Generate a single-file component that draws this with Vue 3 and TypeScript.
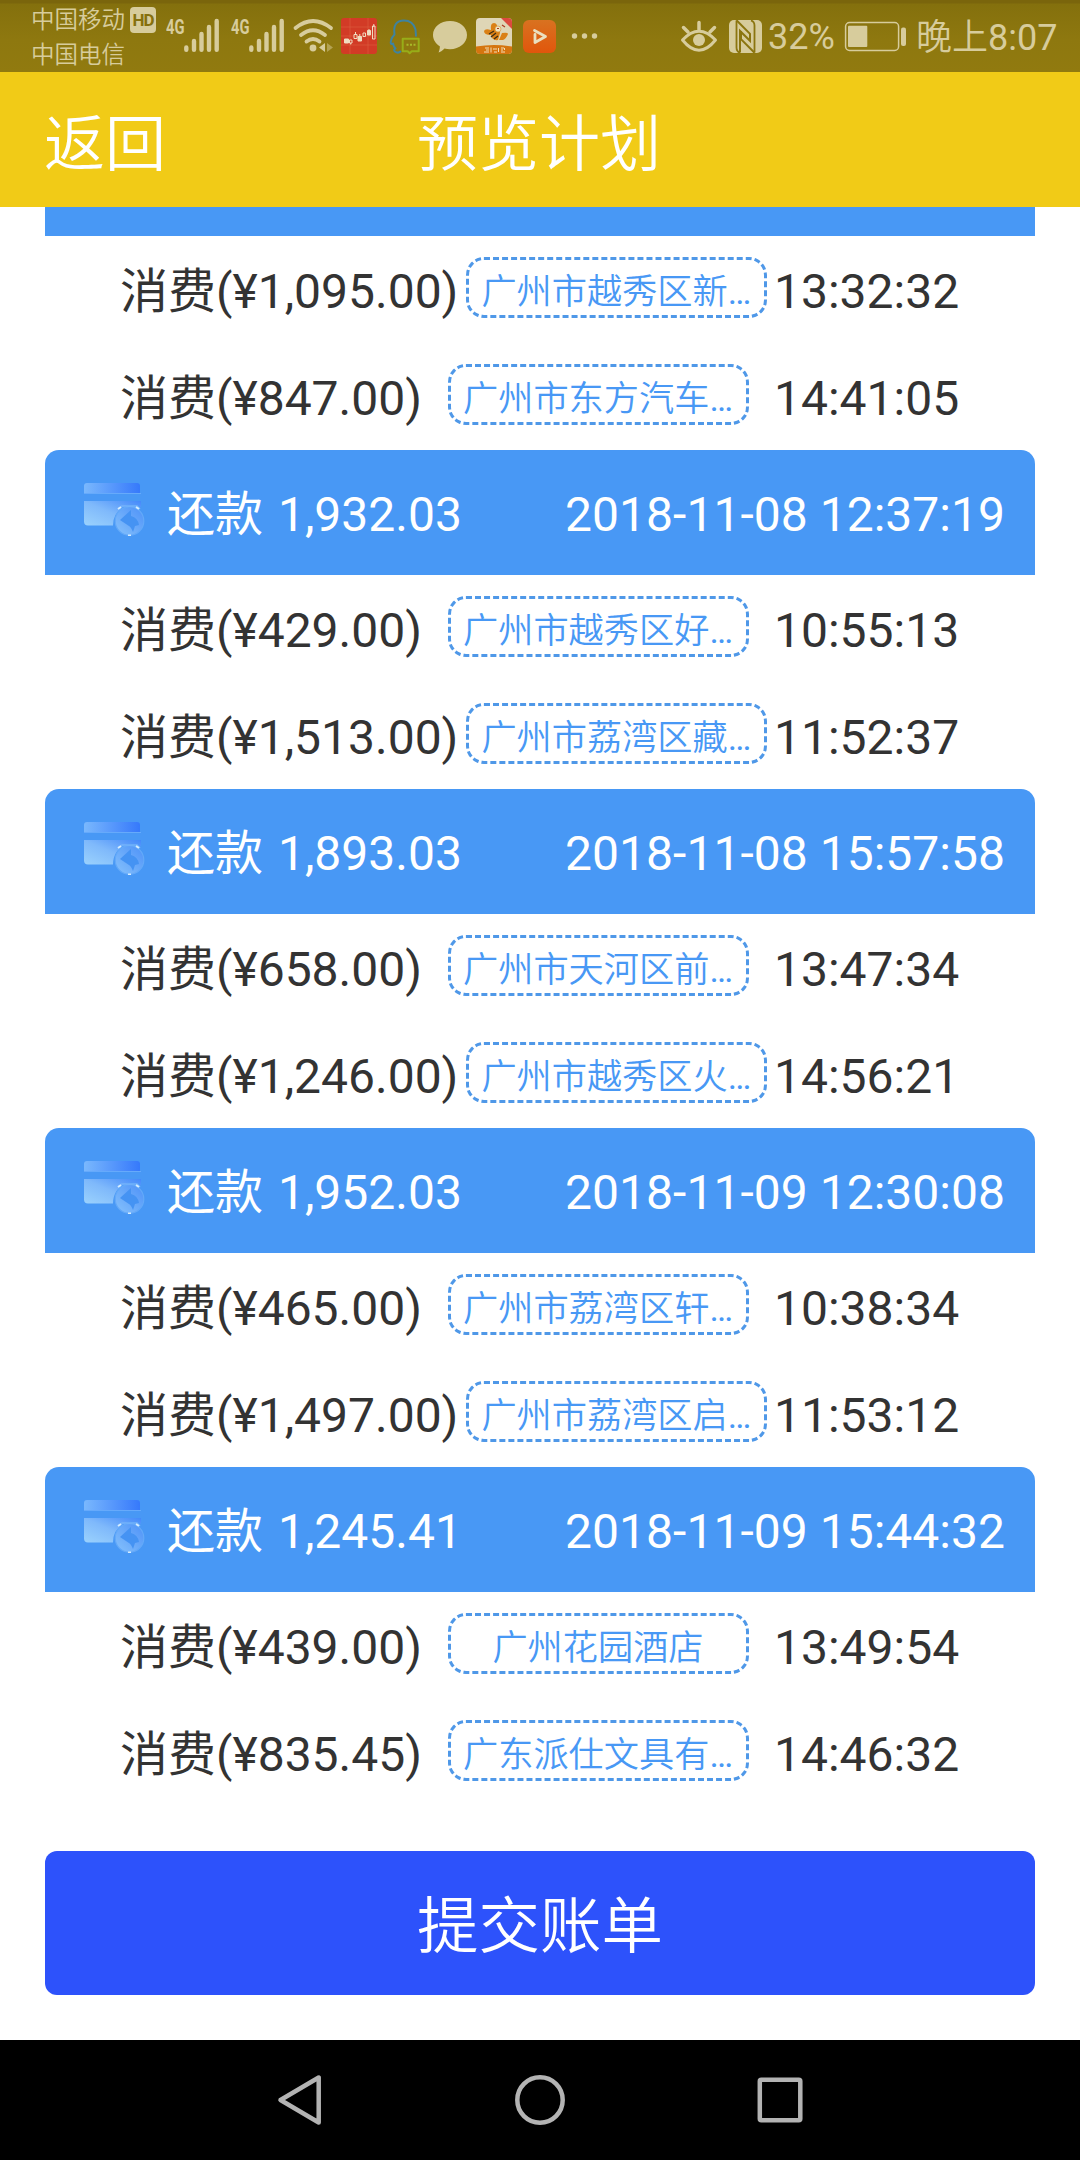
<script setup lang="ts">
interface Expense {
  amount: string
  shop: string
  clipped?: boolean
  time: string
}
interface Group {
  repay: string
  date: string
  items: Expense[]
}

const groups: Group[] = [
  {
    repay: '',
    date: '',
    items: [
      { amount: '1,095.00', shop: '广州市越秀区新', clipped: true, time: '13:32:32' },
      { amount: '847.00', shop: '广州市东方汽车', clipped: true, time: '14:41:05' },
    ],
  },
  {
    repay: '1,932.03',
    date: '2018-11-08 12:37:19',
    items: [
      { amount: '429.00', shop: '广州市越秀区好', clipped: true, time: '10:55:13' },
      { amount: '1,513.00', shop: '广州市荔湾区藏', clipped: true, time: '11:52:37' },
    ],
  },
  {
    repay: '1,893.03',
    date: '2018-11-08 15:57:58',
    items: [
      { amount: '658.00', shop: '广州市天河区前', clipped: true, time: '13:47:34' },
      { amount: '1,246.00', shop: '广州市越秀区火', clipped: true, time: '14:56:21' },
    ],
  },
  {
    repay: '1,952.03',
    date: '2018-11-09 12:30:08',
    items: [
      { amount: '465.00', shop: '广州市荔湾区轩', clipped: true, time: '10:38:34' },
      { amount: '1,497.00', shop: '广州市荔湾区启', clipped: true, time: '11:53:12' },
    ],
  },
  {
    repay: '1,245.41',
    date: '2018-11-09 15:44:32',
    items: [
      { amount: '439.00', shop: '广州花园酒店', time: '13:49:54' },
      { amount: '835.45', shop: '广东派仕文具有', clipped: true, time: '14:46:32' },
    ],
  },
]
</script>

<template>
  <div class="screen">
    <div class="status">
      <div class="carriers"><span>中国移动</span><span>中国电信</span></div>
      <div class="hd">HD</div>
      <div class="net">4G</div>
      <svg class="bars" width="36" height="72" viewBox="184 0 36 72">
        <path d="M186.3 47.5v2.3M194 41v8.8M201.5 34v15.8M209 27v22.8M216.7 21v28.8" />
      </svg>
      <div class="net second">4G</div>
      <svg class="bars" width="36" height="72" viewBox="184 0 36 72">
        <path d="M186.3 47.5v2.3M194 41v8.8M201.5 34v15.8M209 27v22.8M216.7 21v28.8" />
      </svg>
      <svg class="wifi" width="44" height="72" viewBox="291 0 44 72">
        <g fill="none" stroke="#d7cc9c" stroke-width="3.8" stroke-linecap="round">
          <path d="M295.5 28Q313 14 331 28M301 35Q313 25.500 325 35M306.500 41.500Q313 36.500 319.500 41.500" />
        </g>
        <circle cx="313" cy="48" r="3.400" fill="#d7cc9c" />
        <path d="M325 43v9l-6-4.500z" fill="#d7cc9c" />
        <path d="M327 43v9l6-4.500z" fill="#b3a252" />
      </svg>
      <svg class="stock" width="36" height="72" viewBox="341 0 36 72">
        <rect x="341" y="18" width="36" height="36" rx="3" fill="#d23b26" />
        <path d="M341 27h36M341 36h36M341 45h36M350 18v36M368 18v36" stroke="#dc5a3c" stroke-width=".7" />
        <path d="M344.500 39h4v4h-4zM358 36.500h3.500v4.500H358zM367.500 30.500h3v4.500h-3z" fill="#f0dcc0" stroke="#f0dcc0" />
        <path d="M349.500 40h2.500v3h-2.500zM354 34.500h3v4h-3zM363 33h2.500v3.500H363zM372.500 26h2.500v13h-2.500z" fill="none" stroke="#f0dcc0" />
        <path d="M355.500 32v3M359.800 34v2M369 29v2M373.800 24v3M350.700 43v1.500" stroke="#f0dcc0" />
      </svg>
      <svg class="qq" width="34" height="72" viewBox="388 0 34 72">
        <path d="M401 51q-3 3-6 .5-2-1.500.5-3-2-2-2.500-5-3 2-2-3 .5-3 3.500-6-2-14 9.500-14 9 0 11.500 9l.5 7" fill="none" stroke="#3e83a0" stroke-width="2" stroke-linejoin="round" />
        <path d="M402.700 38.700h16v12.500h-7l-2 2-2-2h-5z" fill="none" stroke="#98ad18" stroke-width="2" stroke-linejoin="round" />
        <path d="M406.500 44.800h2M410 44.800h2M413.500 44.800h2" stroke="#a9ba28" stroke-width="2" />
      </svg>
      <svg class="bubble" width="36" height="72" viewBox="432 0 36 72">
        <path d="M450 21c9.500 0 17 6 17 14s-7.500 14.200-17 14.200c-2 0-3.800-.4-5.500-.8-2 2.200-4.500 3.800-6 4 .8-1.500 1.500-4 1.300-6.200-4.200-2.600-6.800-6.600-6.800-11.200 0-8 7.500-14 17-14z" fill="#d7cc9c" />
      </svg>
      <svg class="bee" width="36" height="72" viewBox="476 0 36 72">
        <rect x="476" y="18" width="36" height="36" rx="4" fill="#dfd6b6" />
        <path d="M476 46.500q18-3 36 0V50a4 4 0 0 1-4 4h-28a4 4 0 0 1-4-4z" fill="#d5750f" />
        <path d="M501 18h7a4 4 0 0 1 4 4v7z" fill="#dc4a3e" />
        <path d="M491 30q-1-7 3-7 4 .5 3 6 3 1 3 4l-2 7q-6 1-7-5-7 0-7-4 1-3 7-1zM499 40l3-7q6-1 6 1-2 5-5 6z" fill="#da8015" />
        <path d="M489 34l5-3M491 37l5-4M494 39l4-3" stroke="#3f2d12" stroke-width="1.300" />
        <circle cx="498" cy="29" r="3" fill="#eee2bd" stroke="#d69034" stroke-width=".6" />
        <path d="M497 28.500h2M502 25l3 2" stroke="#a93a22" stroke-width="1.200" />
        <path d="M485 48h4M486 50h3M484 52h5M491 47.500v5M493 49h4M494 52h3M498.500 48v4M501 48h3M501 50h2M501 52h4M504.500 48v2" stroke="#f1dfb8" />
      </svg>
      <svg class="video" width="34" height="72" viewBox="523 0 34 72">
        <defs>
          <linearGradient id="orange" x2="0" y2="1"><stop stop-color="#d97220" /><stop offset="1" stop-color="#e1560c" /></linearGradient>
        </defs>
        <rect x="523" y="20" width="33" height="33" rx="6" fill="url(#orange)" />
        <path d="M534.500 30.500l11 6-10.500 6v-8" fill="none" stroke="#eadfbf" stroke-width="2.800" stroke-linejoin="round" stroke-linecap="round" />
      </svg>
      <svg class="more" width="28" height="72" viewBox="571 0 28 72">
        <g fill="#d7cc9c"><circle cx="574.500" cy="36" r="2.700" /><circle cx="584.500" cy="36" r="2.700" /><circle cx="594.500" cy="36" r="2.700" /></g>
      </svg>
      <svg class="eye" width="38" height="72" viewBox="680 0 38 72">
        <g fill="none" stroke="#d7cc9c" stroke-width="3">
          <path d="M682.500 40q16.500-17.500 33 0-16.500 20.500-33 0z" stroke-linejoin="round" />
          <path d="M699 22.500v7M683.500 27.500l4.500 4.500M714.500 27.500l-4.500 4.500" stroke-width="3.500" stroke-linecap="round" />
        </g>
        <circle cx="699" cy="40" r="6" fill="#d7cc9c" />
      </svg>
      <svg class="nfc" width="34" height="72" viewBox="729 0 34 72">
        <rect x="729" y="20" width="33" height="33" rx="5" fill="#d7cc9c" />
        <path d="M736.500 20.500v27q0 4 3.500 5.200M754.500 52.500v-27q0-4-3.500-5.200" fill="none" stroke="#8b750f" stroke-width="1.800" />
        <path d="M736.500 20.300l13.500 13.500v7L740 31v21.500M754.500 52.700L741 39.200V31" fill="none" stroke="#8b750f" stroke-width="2" />
      </svg>
      <div class="percent">32%</div>
      <svg class="battery" width="64" height="72" viewBox="843 0 64 72">
        <rect x="844.600" y="22.600" width="53" height="27.800" rx="4" fill="none" stroke="#d7cc9c" stroke-width="1.500" />
        <rect x="847" y="25.700" width="19.300" height="21.300" rx="1" fill="#d7cc9c" />
        <rect x="900" y="27.500" width="5" height="18.500" rx="2" fill="#d7cc9c" />
      </svg>
      <div class="clock">晚上<span>8:07</span></div>
    </div>

    <header class="title-bar">
      <span class="back">返回</span>
      <h1>预览计划</h1>
    </header>

    <main>
      <section v-for="(g, i) in groups" :key="i">
        <div v-if="!g.repay" class="strip"></div>
        <div v-else class="head">
          <svg class="card" width="66" height="60" viewBox="82 476 66 60">
            <defs>
              <linearGradient :id="'t' + i"><stop stop-color="#7ab8fd" /><stop offset="1" stop-color="#3679fb" /></linearGradient>
              <linearGradient :id="'b' + i" x1="0" y1="1" x2="1" y2="0"><stop stop-color="#9bd2fd" /><stop offset=".5" stop-color="#7fb9fb" /><stop offset="1" stop-color="#4489fa" /></linearGradient>
              <linearGradient :id="'c' + i" x1="0" y1="1" x2="1" y2="0"><stop stop-color="#86c2fc" /><stop offset="1" stop-color="#4d91f8" /></linearGradient>
            </defs>
            <path d="M84 493v-7q0-3 3-3h50q3 0 3 3v7z" :fill="`url(#t${i})`" />
            <path d="M84 493.500h57" stroke="#66aafb" />
            <path d="M84 501h57v6q-8-4-16-1-12 6-12 19.500H88q-4 0-4-4z" :fill="`url(#b${i})`" />
            <circle cx="129.500" cy="521" r="14.300" :fill="`url(#c${i})`" stroke="#63a9f9" stroke-width="1.200" />
            <path d="M120 520l11-10v6q7 2 8 9l-4 1-2 6q-2-5-4-6z" fill="#4593f3" />
            <path d="M118 509l4-3h15l3 3" fill="none" stroke="#74b3fb" stroke-width="1.500" />
            <path d="M118 509l3-2M136 507l3 2M128 535.500h3" stroke="#d5edff" stroke-width="2" />
          </svg>
          <span class="repay">还款 {{ g.repay }}</span>
          <span class="date">{{ g.date }}</span>
        </div>
        <div v-for="item in g.items" :key="item.time" class="row">
          <span class="amount">消费(¥{{ item.amount }})</span>
          <span class="shop">{{ item.shop }}<span v-if="item.clipped" class="dots">…</span></span>
          <span class="time">{{ item.time }}</span>
        </div>
      </section>
    </main>

    <button class="submit" type="button">提交账单</button>

    <nav>
      <svg width="48" height="60" viewBox="276 2070 48 60"><path d="M280.500 2100L318.700 2077.500V2122.500Z" /></svg>
      <svg width="60" height="60" viewBox="510 2070 60 60"><circle cx="540" cy="2100" r="22.700" /></svg>
      <svg width="60" height="60" viewBox="750 2070 60 60"><rect x="759.800" y="2079.800" width="40.500" height="40.500" rx="1.500" /></svg>
    </nav>
  </div>
</template>

<style>
body {
  margin: 0;
  background: #fff;
}
</style>

<style scoped>
.screen {
  width: 1080px;
  height: 2160px;
  display: flex;
  flex-direction: column;
  overflow: hidden;
  background: #fff;
  font-family: Roboto, "Noto Sans CJK SC", sans-serif;
  color: #333;
  white-space: nowrap;
}
svg {
  display: block;
  flex: none;
}
.status {
  height: 72px;
  flex: none;
  display: flex;
  background: linear-gradient(#7a650c 0 3px, #84700d 4px, #8e780f 40px, #917a0f);
  color: #d7cc9c;
}
.status > div {
  flex: none;
}
.carriers {
  width: 98px;
  margin-left: 31px;
  padding-top: 3px;
  display: flex;
  flex-direction: column;
  font-size: 23.5px;
  line-height: 35px;
  font-weight: 350;
}
.hd {
  width: 26px;
  height: 26px;
  margin: 7px 0 0 1px;
  border-radius: 4px;
  background: #d7cc9c;
  color: #86700d;
  font-size: 17px;
  font-weight: 700;
  line-height: 27px;
  text-align: center;
  letter-spacing: -1px;
}
.net {
  width: 18px;
  margin-left: 10px;
  padding-top: 15px;
  font: 700 21px/24px Roboto, sans-serif;
  transform: scaleX(.7);
  transform-origin: 0 0;
}
.net.second {
  margin-left: 11px;
}
.bars path {
  stroke: #d7cc9c;
  stroke-width: 4.4;
  stroke-linecap: round;
}
.wifi { margin-left: 6px; }
.stock { margin-left: 6px; }
.qq { margin-left: 11px; }
.bubble { margin-left: 10px; }
.bee { margin-left: 8px; }
.video { margin-left: 11px; }
.more { margin-left: 14px; }
.eye { margin-left: 81px; }
.nfc { margin-left: 11px; }
.percent {
  width: 76px;
  margin-left: 5px;
  font-size: 36px;
  line-height: 75px;
  font-weight: 400;
}
.clock {
  margin-left: 8px;
  font-size: 36px;
  line-height: 77px;
  font-weight: 350;
}
.clock span {
  font-weight: 400;
}
.title-bar {
  height: 135px;
  flex: none;
  display: grid;
  grid-template-columns: 1fr auto 1fr;
  align-items: center;
  padding: 0 46px 0 44px;
  background: #f1cb17;
  color: #fff;
  font-size: 61px;
  font-weight: 350;
}
.title-bar h1 {
  margin: 0;
  font: inherit;
}
main {
  padding: 0 45px;
}
.strip {
  height: 29px;
  background: #4898f5;
}
.head {
  height: 125px;
  box-sizing: border-box;
  padding: 0 30px 0 37px;
  display: flex;
  align-items: center;
  background: #4898f5;
  border-radius: 14px 14px 0 0;
  color: #fff;
  font-size: 48px;
}
.card {
  align-self: flex-start;
  margin-top: 26px;
}
.repay {
  margin-left: 19px;
  padding-bottom: 5px;
  word-spacing: 3px;
}
.date {
  margin-left: auto;
  padding-top: 3px;
  letter-spacing: 0.03px;
}
.row {
  height: 107px;
  display: flex;
  align-items: center;
  padding-left: 75px;
  font-size: 48px;
}
.amount {
  min-width: 320px;
  padding: 0 7.5px 5px 0;
}
.shop {
  box-sizing: border-box;
  width: 301px;
  height: 61px;
  margin-bottom: 4px;
  border: 3px dashed #4f98e8;
  border-radius: 18px;
  color: #4898f5;
  font-size: 35.2px;
  line-height: 65px;
  text-align: center;
  font-weight: 350;
}
.dots {
  font-weight: 400;
}
.time {
  width: 261px;
  margin-left: auto;
  padding-top: 3px;
}
.submit {
  height: 144px;
  flex: none;
  margin: 45px 45px 0;
  padding: 9px 0 0;
  border: 0;
  border-radius: 12px;
  background: #2d52fb;
  color: #fff;
  font: 350 61.5px/135px Roboto, "Noto Sans CJK SC", sans-serif;
}
nav {
  height: 120px;
  flex: none;
  margin-top: auto;
  box-sizing: border-box;
  display: flex;
  align-items: center;
  justify-content: center;
  gap: 180px;
  padding-left: 6px;
  background: #000;
}
nav svg {
  fill: none;
  stroke: #b3b3b3;
  stroke-width: 4.5;
  stroke-linejoin: round;
}
nav svg:first-child {
  margin-right: 6px;
}
</style>
